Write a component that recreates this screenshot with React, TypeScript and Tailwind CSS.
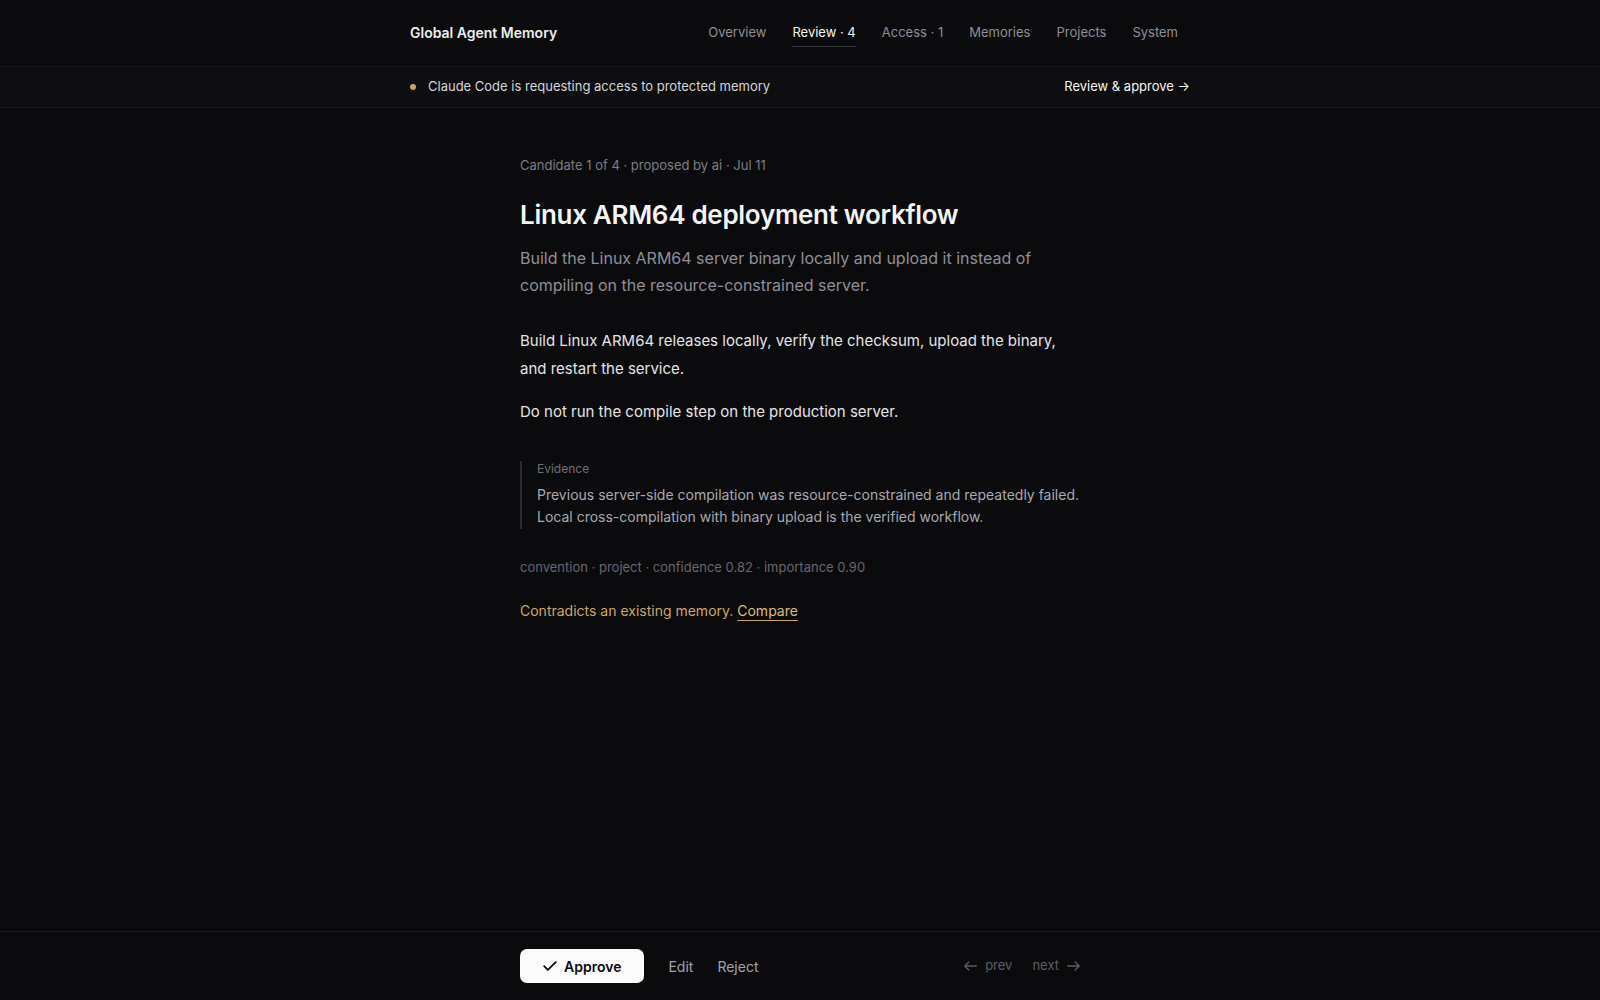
import React from 'react';

const navItems = [
  { label: 'Overview', active: false },
  { label: 'Review · 4', active: true },
  { label: 'Access · 1', active: false },
  { label: 'Memories', active: false },
  { label: 'Projects', active: false },
  { label: 'System', active: false },
];

const CheckIcon = () => (
  <svg width="14" height="10" viewBox="0 0 14 10" fill="none" stroke="currentColor" strokeWidth="1.8" strokeLinecap="round" strokeLinejoin="round">
    <path d="M1.2 5.2 4.8 8.8 12.8 1.2" />
  </svg>
);

const ArrowLeft = () => (
  <svg width="13" height="10" viewBox="0 0 13 10" fill="none" stroke="currentColor" strokeWidth="1.3" strokeLinecap="round" strokeLinejoin="round">
    <path d="M12.3 5H0.8M4.8 1 0.8 5l4 4" />
  </svg>
);

const ArrowRight = () => (
  <svg width="13" height="10" viewBox="0 0 13 10" fill="none" stroke="currentColor" strokeWidth="1.3" strokeLinecap="round" strokeLinejoin="round">
    <path d="M0.7 5h11.5M8.2 1l4 4-4 4" />
  </svg>
);

export default function App() {
  return (
    <div className="min-h-screen flex flex-col bg-[#0b0b0d] text-[#e4e4e7] font-['Inter',sans-serif] antialiased">
      {/* Top bar */}
      <header className="h-[67px] border-b border-[#1a1a1e]">
        <div className="max-w-[780px] mx-auto h-full flex items-center justify-between">
          <div className="text-[14px] font-semibold text-[#ededee] -translate-y-px">Global Agent Memory</div>
          <nav className="flex items-center gap-0.5">
            {navItems.map((item) => (
              <a
                key={item.label}
                className={
                  item.active
                    ? 'px-3 text-[13px] cursor-pointer text-[#f4f4f5] underline underline-offset-[9px] decoration-[#3a3a40] decoration-1'
                    : 'px-3 text-[13px] cursor-pointer text-[#8e8e96]'
                }
              >
                {item.label}
              </a>
            ))}
          </nav>
        </div>
      </header>

      {/* Access request banner */}
      <div className="h-[41px] border-b border-[#1a1a1e] bg-[#0e0e10]">
        <div className="max-w-[780px] mx-auto h-full flex items-center justify-between">
          <div className="flex items-center gap-3">
            <span className="w-1.5 h-1.5 rounded-full bg-[#c9a45c]" />
            <span className="text-[13px] text-[#d4d4d8]">Claude Code is requesting access to protected memory</span>
          </div>
          <a className="text-[13px] text-[#f4f4f5] cursor-pointer">Review &amp; approve →</a>
        </div>
      </div>

      {/* Candidate */}
      <main className="flex-1">
        <div className="max-w-[560px] mx-auto pt-[47px] pb-10">
          <div className="text-[13px] leading-5 text-[#7c7c85]">Candidate 1 of 4 · proposed by ai · Jul 11</div>
          <h1 className="mt-6 text-[26px] leading-8 font-semibold tracking-[-0.3px] text-[#f4f4f5]">
            Linux ARM64 deployment workflow
          </h1>
          <p className="mt-3.5 text-[16px] leading-[1.7] text-[#8f8f98]">
            Build the Linux ARM64 server binary locally and upload it instead of compiling on the resource-constrained server.
          </p>

          <div className="mt-7 text-[15px] leading-[27.5px] text-[#e4e4e7]">
            <p>Build Linux ARM64 releases locally, verify the checksum, upload the binary, and restart the service.</p>
            <p className="mt-4">Do not run the compile step on the production server.</p>
          </div>

          <div className="mt-[35px] border-l-2 border-[#2a2a2f] pl-[15px]">
            <div className="text-[12px] leading-4 text-[#6e6e76]">Evidence</div>
            <p className="mt-[7px] text-[14px] leading-[1.6] text-[#a8a8b0]">
              Previous server-side compilation was resource-constrained and repeatedly failed. Local cross-compilation with binary upload is the verified workflow.
            </p>
          </div>

          <div className="mt-7 text-[13px] leading-5 text-[#66666e]">
            convention · project · confidence 0.82 · importance 0.90
          </div>

          <div className="mt-6 text-[14px] leading-5 text-[#c9a862]">
            Contradicts an existing memory.{' '}
            <a className="text-[#dcbd77] underline underline-offset-[4px] decoration-[#c9a862] cursor-pointer">Compare</a>
          </div>
        </div>
      </main>

      {/* Action bar */}
      <footer className="h-[69px] border-t border-[#1a1a1e]">
        <div className="max-w-[560px] mx-auto h-full flex items-center justify-between">
          <div className="flex items-center gap-6">
            <button className="h-[34px] px-[23px] flex items-center gap-[7px] rounded-[7px] bg-[#fafafa] text-[#0b0b0d] text-[14px] font-semibold">
              <CheckIcon />
              Approve
            </button>
            <button className="text-[14px] text-[#a1a1aa]">Edit</button>
            <button className="text-[14px] text-[#a1a1aa]">Reject</button>
          </div>
          <div className="flex items-center gap-5 text-[13px] text-[#5c5c64]">
            <button className="flex items-center gap-2">
              <ArrowLeft />
              prev
            </button>
            <button className="flex items-center gap-2">
              next
              <ArrowRight />
            </button>
          </div>
        </div>
      </footer>
    </div>
  );
}
